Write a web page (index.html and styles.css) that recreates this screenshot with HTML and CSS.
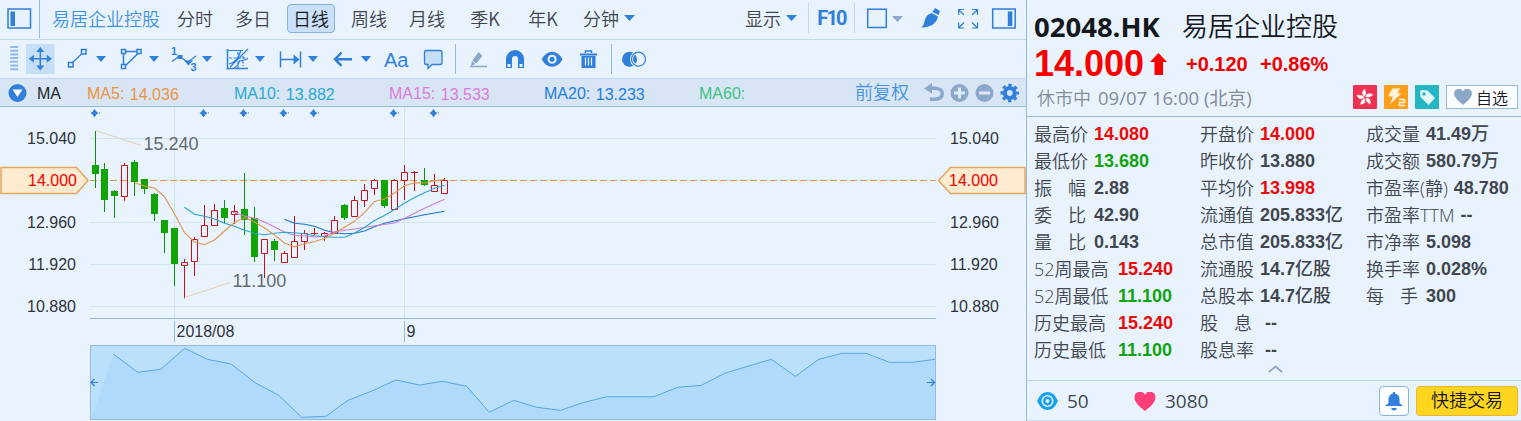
FILE: index.html
```html
<!DOCTYPE html>
<html lang="zh-CN">
<head>
    <meta charset="UTF-8">
    <meta name="viewport" content="width=device-width, initial-scale=1.0">
    <title>易居企业控股 02048.HK</title>
    <link rel="stylesheet" href="styles.css">
</head>
<body>
    <div class="app">
        <main class="chart-panel">
            <!-- period tabs -->
            <header class="top-bar">
                <svg class="panel-toggle" width="40" height="38" viewBox="0 0 40 38">
                    <rect x="8" y="9" width="22.5" height="19" class="line thick"/>
                    <rect x="10.5" y="11.5" width="4.5" height="14.5" class="fill"/>
                    <path d="M39.5 0V38" class="divider"/>
                </svg>
                <span class="stock-tab">易居企业控股</span>
                <nav class="tabs">
                    <span class="tab"><span>分时</span></span>
                    <span class="tab"><span>多日</span></span>
                    <span class="tab active"><span>日线</span></span>
                    <span class="tab"><span>周线</span></span>
                    <span class="tab"><span>月线</span></span>
                    <span class="tab"><span>季K</span></span>
                    <span class="tab"><span>年K</span></span>
                    <span class="tab"><span>分钟</span></span>
                </nav>
                <i class="caret"></i>
                <span class="display-menu">显示</span>
                <i class="caret"></i>
                <span class="f10">F10</span>
                <svg width="166" height="38" viewBox="860 0 166 38">
                    <rect x="867.7" y="9.2" width="18.6" height="18.3" class="line thick"/>
                    <path d="M892 16h11l-5.500 6z" fill="#8ba8cb"/>
                    <!-- brush -->
                    <path d="M935 8l5 3-1.500 4-6-3z M931.500 13l6.500 3.500c-1 6-7 11.500-17 11 3-1.500 3-5 4-8 1-3.500 3.500-5.500 6.500-6.500z" class="fill"/>
                    <!-- fullscreen -->
                    <path d="M958.700 15V9.500H964M959 10l5 5M972 9.500h5.500V15M977 10l-5 5M958.700 22.500V28H964M959 27.500l5-5M977.500 22.500V28H972M977 27.500l-5-5" class="line"/>
                    <rect x="992.700" y="9" width="22.500" height="19" class="line thick"/>
                    <rect x="1007.800" y="11.500" width="4.500" height="14.500" class="fill"/>
                </svg>
            </header>

            <!-- drawing tools -->
            <div class="tool-bar">
                <svg width="64" height="38" viewBox="0 40 64 38">
                    <path d="M14.200 46V72" stroke="#8fbbe8" stroke-width="8" stroke-dasharray="2 1.700"/>
                    <rect x="26" y="44" width="28.500" height="30" fill="#c6def7"/>
                    <path d="M40.300 49V68.500M30.500 58.700H50" class="line thick"/>
                    <path d="M40.300 47l4 5h-8zM40.300 70.500l4-5h-8zM28.800 58.700l5-4v8zM51.800 58.700l-5-4v8z" class="fill"/>
                </svg>
                <svg width="50" height="38" viewBox="64 40 50 38">
                    <path d="M72.500 62.500L81.500 54" class="line"/>
                    <rect x="68.500" y="62.500" width="4.500" height="4.500" class="line thick"/>
                    <rect x="81.500" y="49.500" width="4.500" height="4.500" class="line thick"/>
                    <path d="M96 56h10l-5 6z" class="fill"/>
                </svg>
                <svg width="53" height="38" viewBox="114 40 53 38">
                    <path d="M123.500 53V65M126 51.500H137M138 53.500L125.500 65.500" class="line thick"/>
                    <rect x="121.500" y="49.500" width="4" height="4" class="box"/>
                    <rect x="137" y="49.500" width="4" height="4" class="box"/>
                    <rect x="121.500" y="64.500" width="4" height="4" class="box"/>
                    <path d="M149 56h10l-5 6z" class="fill"/>
                </svg>
                <svg width="53" height="38" viewBox="167 40 53 38">
                    <path d="M172 61.500l7-5 9 5.500 8-6" class="line"/>
                    <rect x="177.500" y="55" width="5" height="4" class="fill"/>
                    <path d="M184 60.500h9l-4.500 5z" class="fill"/>
                    <text x="171" y="55" class="tiny">1</text>
                    <text x="190.500" y="71" class="tiny">3</text>
                    <path d="M202 56h10l-5 6z" class="fill"/>
                </svg>
                <svg width="53" height="38" viewBox="220 40 53 38">
                    <path d="M227.500 49V69.500M226.500 68.500H248" class="line thick"/>
                    <path d="M227 50.500H243M230 67L248 49M229 64q9-2 12-14M234 68q5-3 6-8M240 61l8-2" class="line"/>
                    <path d="M229 58H248M238 52V68M243 56v10" class="line" stroke-dasharray="3 1.500"/>
                    <path d="M255 56h10l-5 6z" class="fill"/>
                </svg>
                <svg width="55" height="38" viewBox="273 40 55 38">
                    <path d="M280.500 51.500V67.500M300.500 51.500V67.500M280 59.500H296" class="line thick"/>
                    <path d="M293.500 54.500l6 5-6 5z" class="fill"/>
                    <path d="M308 56h10l-5 6z" class="fill"/>
                </svg>
                <svg width="50" height="38" viewBox="328 40 50 38">
                    <path d="M336 59.200H352M341.500 52.500l-6.500 6.700 6.500 6.700" class="line bold"/>
                    <path d="M361 56h10l-5 6z" class="fill"/>
                </svg>
                <span class="text-tool">Aa</span>
                <svg width="248" height="38" viewBox="415 40 248 38">
                    <path d="M426.500 50.500h13.500q2 0 2 2v10q0 2-2 2h-8l-4 4v-4h-1.500q-2 0-2-2v-10q0-2 2-2z" fill="#c6def7" stroke="#2f7fdb" stroke-width="1.300"/>
                    <path d="M455.500 44V74M611.500 44V74" class="divider"/>
                    <path d="M471 66l1-5 6.500-9 4 4-7 8z" fill="#8ba8cb"/>
                    <path d="M471.500 60l5 4.500" stroke="#e8f3fd"/>
                    <path d="M470 66.500H487" stroke="#8ba8cb" stroke-width="1.500"/>
                    <!-- magnet -->
                    <path d="M506 68V59a9 9 0 0 1 18 0v9h-6v-9a3 3 0 0 0-6 0v9z" class="fill"/>
                    <path d="M507.500 64h3v3h-3zM519.500 64h3v3h-3z" fill="#e8f3fd"/>
                    <!-- eye -->
                    <path d="M541.700 59.300q4-7.500 10.400-7.500t10.400 7.500q-4 7.500-10.400 7.500t-10.400-7.500z" class="fill"/>
                    <circle cx="552.100" cy="59.300" r="4.500" fill="#e8f3fd"/>
                    <circle cx="552.100" cy="59.300" r="2.500" class="fill"/>
                    <!-- trash -->
                    <path d="M580 53.500h17v2h-17zM581.500 56h14v12h-14z" class="fill"/>
                    <path d="M585.500 53v-2h6v2" class="line thick"/>
                    <path d="M585.500 57.500v8M588.500 57.500v8M591.500 57.500v8" stroke="#e8f3fd" stroke-width="1.200"/>
                    <!-- compare -->
                    <circle cx="629.500" cy="59.200" r="7.500" class="fill"/>
                    <circle cx="638.500" cy="59.200" r="7" fill="none" stroke="#e8f3fd" stroke-width="3"/>
                    <circle cx="638.500" cy="59.200" r="7" class="line"/>
                </svg>
            </div>

            <!-- moving averages -->
            <div class="ma-bar">
                <svg width="37" height="28" viewBox="0 79 37 28">
                    <circle cx="17.500" cy="93" r="9" class="fill"/>
                    <path d="M12.500 89.500h10l-5 7.500z" fill="#fff"/>
                </svg>
                <span class="ma-title">MA</span>
                <span class="ma ma5">MA5: <b>14.036</b></span>
                <span class="ma ma10">MA10: <b>13.882</b></span>
                <span class="ma ma15">MA15: <b>13.533</b></span>
                <span class="ma ma20">MA20: <b>13.233</b></span>
                <span class="ma ma60">MA60:</span>
                <span class="adjust">前复权</span>
                <svg width="108" height="28" viewBox="918 79 108 28">
                    <g fill="#8ba8cb">
                        <path d="M924 88.500l8-5.500v3.500h3q9 .5 9 7.300t-9 7.300h-5v-3.700h5q5.500 0 5.500-3.800t-5.500-3.700h-3v3.600z"/>
                        <circle cx="959.500" cy="93" r="9"/>
                        <circle cx="984.500" cy="93" r="9"/>
                    </g>
                    <path d="M954 93h11M959.500 87.500v11M979 93h11" stroke="#dfeaf8" stroke-width="3"/>
                    <circle cx="1009.800" cy="93" r="5" fill="none" stroke="#2f7fdb" stroke-width="4.200"/>
                    <circle cx="1009.800" cy="93" r="8" fill="none" stroke="#2f7fdb" stroke-width="2.600" stroke-dasharray="3.300 2.983" stroke-dashoffset="1.650"/>
                </svg>
            </div>

            <svg class="chart" width="1026" height="314" viewBox="0 107 1026 314">
                <path class="grid" d="M90 138.500H936M90 222.500H936M90 264.500H936M90 306.500H936M174.500 107V318M404.500 107V318"/>
                <path class="axis-line" d="M90 318.500H936M174.500 321V342M404.500 321V342"/>
                <path class="price-line" d="M90 180.500H936"/>

                <!-- event markers -->
                <g class="markers">
                    <path id="marker" d="M90.500 113l2-1.300 2-2.700 2 2.700 2 1.300-2 1.500-2 2.700-2-2.700zM99 112.500h1v1h-1z"/>
                    <use href="#marker" x="109"/>
                    <use href="#marker" x="149"/>
                    <use href="#marker" x="189"/>
                    <use href="#marker" x="219"/>
                    <use href="#marker" x="299"/>
                    <use href="#marker" x="339"/>
                </g>

                <!-- falling candles -->
                <path class="down-wick" d="M95.500 131V188M104.500 163V212M114.500 190V218M134.500 160V196M144.500 179V194M154.500 193V221M164.500 220V253M174.500 228V286M224.500 200V223M244.500 173V235M254.500 207V262M274.500 239V261M344.500 204V220M384.500 180V208M424.500 168V186"/>
                <path class="down-body" d="M92 165h7v9h-7zM101 169h7v31h-7zM111 191h7v5h-7zM131 162h7v20h-7zM141 179h7v10h-7zM151 194h7v20h-7zM161 220h7v13h-7zM171 228h7v36h-7zM221 208h7v10h-7zM241 209h7v11h-7zM251 218h7v39h-7zM271 241h7v9h-7zM341 205h7v13h-7zM381 180h7v26h-7zM421 180h7v5h-7z"/>
                <!-- rising candles -->
                <path class="up" d="M124.500 163V165M124.500 197V201M184.500 259V262M184.500 266V298.500M194.500 237V239M194.500 262V276M204.500 205V225M214.500 204V210M234.500 205V211M234.500 215V224M264.500 254V278M284.500 251V253M294.500 216V241M304.500 230V233M304.500 242V250M311 233.500H318M314.500 228V235M324.500 232V233M324.500 237V241M334.500 216V220M354.500 196V200M364.500 184V190M364.500 201V207M374.500 179V180M374.500 189V195M394.500 179V180M404.500 165V172M404.500 181V200M411 172.500H418M414.500 171V191M434.500 174V185M444.500 178V180"/>
                <path class="up" d="M121.500 165.500h6v31h-6zM181.500 262.500h6v3h-6zM191.500 239.500h6v22h-6zM201.500 225.500h6v11h-6zM211.500 210.500h6v15h-6zM231.500 211.500h6v3h-6zM261.500 239.500h6v14h-6zM281.500 253.500h6v9h-6zM291.500 241.500h6v16h-6zM301.500 233.500h6v8h-6zM321.500 233.500h6v3h-6zM331.500 220.500h6v13h-6zM351.500 200.500h6v16h-6zM361.500 190.500h6v10h-6zM371.500 180.500h6v8h-6zM391.500 180.500h6v29h-6zM401.500 172.500h6v8h-6zM431.500 185.500h6v6h-6zM441.500 180.500h6v13h-6z"/>

                <polyline class="avg avg20" points="284.500,219.300 294.500,223.300 304.500,224.300 314.500,226.300 324.500,230.300 334.500,232.700 344.500,233.700 354.500,233.300 364.500,231 374.500,226.700 384.500,223.300 404.500,218.700 424.500,214.700 444.500,211.300"/>
                <polyline class="avg avg15" points="233,212.300 244.500,216 254.500,218.300 264.500,222 274.500,227 284.500,232 294.500,235.300 304.500,236 314.500,237 324.500,236 334.500,231.700 354.500,229 374.500,225.700 394.500,223 404.500,218.300 424.500,208.300 444.500,199.300"/>
                <polyline class="avg avg10" points="184.500,207.300 194.500,214.300 204.500,216.300 214.500,219 224.500,223.300 234.500,226.300 244.500,230.300 254.500,233.300 264.500,234.700 274.500,233.300 284.500,232.300 294.500,232.700 304.500,233.700 314.500,235.700 324.500,236.700 334.500,237.300 344.500,237.300 354.500,233 364.500,227.500 374.500,220.500 384.500,215.500 394.500,209.500 404.500,203.300 414.500,197.500 424.500,192.700 434.500,188.300 444.500,185.300"/>
                <polyline class="avg avg5" points="134.500,182.700 144.500,186 154.500,188 164.500,196.700 174.500,214 184.500,232.700 194.500,242 204.500,244.700 214.500,240 224.500,231 234.500,222.500 244.500,217.500 254.500,222 264.500,228 274.500,235 284.500,243 294.500,247 304.500,243.700 314.500,241.500 324.500,238.500 334.500,233.300 344.500,227.300 354.500,221.300 364.500,212.700 374.500,201.500 384.500,199 394.500,193 404.500,185.700 414.500,182.700 424.500,183 434.500,180.600 444.500,179.500"/>

                <!-- high and low callouts -->
                <path class="callout-line" d="M95.500 130.500L141 145.500M184.500 297.500L230 282.500"/>
                <text class="callout" x="143.500" y="150">15.240</text>
                <text class="callout" x="232.500" y="287">11.100</text>

                <!-- price scales -->
                <path class="price-tag" d="M1 167.500H76.500L88 180.500L76.500 193.500H1z"/>
                <path class="price-tag" d="M1025 167.500H950.500L938.500 180.500L950.500 193.500H1025z"/>
                <g class="scale" text-anchor="end">
                    <text x="76" y="144">15.040</text>
                    <text x="77" y="186" class="now">14.000</text>
                    <text x="76" y="228">12.960</text>
                    <text x="76" y="270">11.920</text>
                    <text x="76" y="312">10.880</text>
                </g>
                <g class="scale">
                    <text x="950" y="144">15.040</text>
                    <text x="949" y="186" class="now">14.000</text>
                    <text x="950" y="228">12.960</text>
                    <text x="950" y="270">11.920</text>
                    <text x="950" y="312">10.880</text>
                    <text x="176.500" y="337">2018/08</text>
                    <text x="406.500" y="337">9</text>
                </g>

                <!-- range navigator -->
                <rect class="nav-box" x="90.500" y="345.500" width="845" height="74"/>
                <path class="nav-area" d="M91 419L113.300 354L137.700 372.300L160.700 369.300L184.700 348.300L207.300 359.300L231.300 364L255 382.700L278.700 395.300L301.700 417.300L325.700 416.300L348 400.300L372.700 390.700L395.700 380L419.300 385L442.700 381.300L466.700 386.300L489.300 412.300L513.600 400.300L536.800 407.300L560.400 410.300L583.200 402.700L606.400 396.700H653.900L677.500 387.300L701.400 385.300L724.600 373.300L748.600 366L771.400 359.300L795.400 376.300L818.900 359.300L841.800 353.300H866L889.600 362.300H912.900L935 359.300V419z"/>
                <polyline class="nav-line" points="113.300,354 137.700,372.300 160.700,369.300 184.700,348.300 207.300,359.300 231.300,364 255,382.700 278.700,395.300 301.700,417.300 325.700,416.300 348,400.300 372.700,390.700 395.700,380 419.300,385 442.700,381.300 466.700,386.300 489.300,412.300 513.600,400.300 536.800,407.300 560.400,410.300 583.200,402.700 606.400,396.700 653.900,396.700 677.500,387.300 701.400,385.300 724.600,373.300 748.600,366 771.400,359.300 795.400,376.300 818.900,359.300 841.800,353.300 866,353.300 889.600,362.300 912.900,362.300 935,359.300"/>
                <path class="line" d="M98 382.500H91.500M94.500 379l-3.500 3.500 3.500 3.500M927 382.500h7.500M931 379l3.500 3.500-3.500 3.500"/>
            </svg>
        </main>

        <aside class="quote-panel">
            <section class="quote-head">
                <div class="title-row"><span class="code">02048.HK</span><span class="name">易居企业控股</span></div>
                <div class="price-row">
                    <span class="price">14.000</span>
                    <svg width="17" height="22" viewBox="0 0 17 22"><path d="M8.500 0L17 9h-4v13H4.500V9H0z" fill="#f80000"/></svg>
                    <span class="change">+0.120</span>
                    <span class="change">+0.86%</span>
                </div>
                <div class="status-row">
                    <span class="status">休市中</span>
                    <span class="status time">09/07 16:00 (北京)</span>
                    <span class="badges">
                        <svg width="24" height="24" viewBox="0 0 24 24">
                            <rect width="24" height="24" rx="1" fill="#f03252"/>
                            <g fill="#fff" stroke="#f03252" stroke-width=".8">
                                <path id="petal" d="M12 12.500C7 10 8.500 4.500 12.500 3.500c-.5 2 2.500 4.500-.5 9z"/>
                                <use href="#petal" transform="rotate(72 12 12.500)"/>
                                <use href="#petal" transform="rotate(144 12 12.500)"/>
                                <use href="#petal" transform="rotate(216 12 12.500)"/>
                                <use href="#petal" transform="rotate(288 12 12.500)"/>
                            </g>
                        </svg>
                        <svg width="24" height="24" viewBox="0 0 24 24">
                            <rect width="24" height="24" rx="1" fill="#fd9f1b"/>
                            <path d="M8.500 3.500H16l-2.500 5h4L6 19l3-7.500H4z" fill="#fff5d8"/>
                            <path d="M15 14.500h5.500v3H15.500v3H21" fill="none" stroke="#fff5d8" stroke-width="1.500"/>
                        </svg>
                        <svg width="24" height="24" viewBox="0 0 24 24">
                            <rect width="24" height="24" rx="1" fill="#25b6c4"/>
                            <path d="M5 6.500L6.500 5l6 .5 7.500 7.500-6.500 7L5.500 12z" fill="#e4f7fa"/>
                            <circle cx="9" cy="9" r="1.700" fill="#25b6c4"/>
                        </svg>
                    </span>
                    <span class="watch">
                        <svg width="18" height="16" viewBox="0 0 22 20"><path d="M11 20C3 13.500 0 10 0 6a5.800 5.800 0 0 1 11-3 5.800 5.800 0 0 1 11 3c0 4-3 7.500-11 14z" fill="#8ba8cb"/></svg>
                        自选
                    </span>
                </div>
            </section>

            <section class="stats">
                <div class="col">
                    <div class="row"><label>最高价</label><b class="red">14.080</b></div>
                    <div class="row"><label>最低价</label><b class="green">13.680</b></div>
                    <div class="row"><label class="pair"><i>振</i><i>幅</i></label><b>2.88</b></div>
                    <div class="row"><label class="pair"><i>委</i><i>比</i></label><b>42.90</b></div>
                    <div class="row"><label class="pair"><i>量</i><i>比</i></label><b>0.143</b></div>
                    <div class="row wide"><label>52周最高</label><b class="red">15.240</b></div>
                    <div class="row wide"><label>52周最低</label><b class="green">11.100</b></div>
                    <div class="row wide"><label>历史最高</label><b class="red">15.240</b></div>
                    <div class="row wide"><label>历史最低</label><b class="green">11.100</b></div>
                </div>
                <div class="col">
                    <div class="row"><label>开盘价</label><b class="red">14.000</b></div>
                    <div class="row"><label>昨收价</label><b>13.880</b></div>
                    <div class="row"><label>平均价</label><b class="red">13.998</b></div>
                    <div class="row"><label>流通值</label><b>205.833<u>亿</u></b></div>
                    <div class="row"><label>总市值</label><b>205.833<u>亿</u></b></div>
                    <div class="row"><label>流通股</label><b>14.7<u>亿股</u></b></div>
                    <div class="row"><label>总股本</label><b>14.7<u>亿股</u></b></div>
                    <div class="row none"><label class="pair"><i>股</i><i>息</i></label><b>--</b></div>
                    <div class="row none"><label>股息率</label><b>--</b></div>
                </div>
                <div class="col">
                    <div class="row"><label>成交量</label><b>41.49<u>万</u></b></div>
                    <div class="row"><label>成交额</label><b>580.79<u>万</u></b></div>
                    <div class="row"><label>市盈率(静)</label><b>48.780</b></div>
                    <div class="row"><label>市盈率TTM</label><b>--</b></div>
                    <div class="row"><label>市净率</label><b>5.098</b></div>
                    <div class="row"><label>换手率</label><b>0.028%</b></div>
                    <div class="row"><label class="pair"><i>每</i><i>手</i></label><b>300</b></div>
                </div>
            </section>
            <div class="collapse">
                <svg width="15" height="8" viewBox="0 0 15 8"><path d="M1 7l6.500-5.500L14 7" fill="none" stroke="#8ba8cb" stroke-width="1.800"/></svg>
            </div>

            <footer class="quote-foot">
                <svg width="21" height="20" viewBox="0 0 21 20">
                    <path d="M0 10Q4 1 10.500 1T21 10Q17 19 10.500 19T0 10z" fill="#17a2f0"/>
                    <circle cx="10.500" cy="10" r="6" fill="#e8f3fd"/>
                    <circle cx="10.500" cy="10" r="3.200" fill="none" stroke="#17a2f0" stroke-width="2.600"/>
                </svg>
                <span class="views">50</span>
                <svg width="22" height="19" viewBox="0 0 22 20"><path d="M11 20C3 13.500 0 10 0 6a5.800 5.800 0 0 1 11-3 5.800 5.800 0 0 1 11 3c0 4-3 7.500-11 14z" fill="#ff3f7a"/></svg>
                <span class="likes">3080</span>
                <span class="bell">
                    <svg width="18" height="19" viewBox="0 0 18 19">
                        <path d="M8 0h2v1.500q4.500 1 4.500 6V11L18 14H0l3.500-3V7.500q0-5 4.500-6zM6 16h6q-1 2.500-3 2.500T6 16z" class="fill"/>
                    </svg>
                </span>
                <span class="trade">快捷交易</span>
            </footer>
        </aside>
    </div>
</body>
</html>
```
FILE: styles.css
```css
* {
    box-sizing: border-box;
}

body {
    margin: 0;
    background: #e8f3fd;
    color: #42464f;
    font-family: "Liberation Sans", "Noto Sans CJK SC", sans-serif;
    font-weight: 350;
}

svg {
    display: block;
    flex: none;
}

.app {
    display: flex;
    width: 1521px;
    height: 421px;
    overflow: hidden;
    white-space: nowrap;
}

.chart-panel {
    width: 1027px;
    flex: none;
    border-right: 1px solid #94badf;
}

/* shared icon strokes */
.line {
    fill: none;
    stroke: #2f7fdb;
    stroke-width: 1.2;
}

.thick { stroke-width: 1.5; }
.bold { stroke-width: 2.5; }
.fill { fill: #2f7fdb; }
.divider { stroke: #94badf; }

.box {
    fill: #e8f3fd;
    stroke: #2f7fdb;
    stroke-width: 1.5;
}

.tiny {
    font: bold 11px "Liberation Sans", sans-serif;
    fill: #2f7fdb;
}

.caret {
    width: 11px;
    height: 6px;
    background: #2f7fdb;
    clip-path: polygon(0 0, 100% 0, 50% 100%);
}

/* top bar */
.top-bar {
    display: flex;
    align-items: center;
    height: 40px;
    padding-bottom: 3px;
    border-bottom: 1px solid #c3d8ec;
    font-family: "Noto Sans CJK SC", sans-serif;
    font-size: 18px;
}

.top-bar svg {
    align-self: flex-start;
}

.stock-tab {
    width: 114px;
    margin-left: 12px;
    color: #4394e2;
}

.tabs {
    display: flex;
}

.tab {
    width: 58px;
    display: flex;
    justify-content: center;
}

.tab span {
    height: 29px;
    padding: 0 5px;
    line-height: 26px;
    border: 1px solid transparent;
    border-radius: 4px;
}

.active span {
    background: #c9e0f8;
    border-color: #86b3e0;
    color: #15181d;
}

.tabs + .caret {
    margin-left: -6px;
}

.display-menu {
    margin: 0 5px 0 auto;
}

.f10 {
    width: 47px;
    height: 30px;
    margin-left: 11px;
    margin-right: 5px;
    border: solid #c3d8ec;
    border-width: 0 1px;
    color: #2f7fdb;
    font: bold 20px/31px Roboto, sans-serif;
    letter-spacing: -1.8px;
    text-align: center;
}

/* drawing tools */
.tool-bar {
    display: flex;
    height: 39px;
    border-bottom: 1px solid #c3d8ec;
}

.text-tool {
    width: 37px;
    padding-left: 6px;
    color: #2f7fdb;
    font-size: 20px;
    line-height: 40px;
}

/* moving averages */
.ma-bar {
    display: flex;
    height: 28px;
    background: #d7e5f5;
    border-bottom: 1px solid #94badf;
    font-size: 16px;
    line-height: 29px;
}

.ma-title {
    width: 50px;
    color: #22262c;
}

.ma {
    display: flex;
    gap: 5.500px;
    width: 155px;
}

.ma b {
    font-weight: normal;
    padding-top: 1px;
}

.ma5 { width: 147px; color: #ee9440; }
.ma10 { color: #2aa9d6; }
.ma15 { color: #dc7bdc; }
.ma20 { color: #1e7fe0; }
.ma60 { color: #3fc184; width: 156px; }

.adjust {
    width: 63px;
    color: #4394e2;
    font-size: 18px;
}

/* chart */
.grid {
    fill: none;
    stroke: #d3e4f1;
}

.axis-line {
    fill: none;
    stroke: #94badf;
}

.price-line {
    stroke: #d6994e;
    stroke-dasharray: 7 3;
}

.markers { fill: #2f7fdb; }
.down-wick { stroke: #0a900a; }
.down-body { fill: #10a505; }

.up {
    fill: none;
    stroke: #c8101a;
}

.avg {
    fill: none;
    stroke-width: 1.1;
}

.avg5 { stroke: #e2944a; }
.avg10 { stroke: #2aa5cf; }
.avg15 { stroke: #d37bd6; }
.avg20 { stroke: #1f76d2; }

.callout-line {
    fill: none;
    stroke: #e7cfae;
}

.callout {
    font-size: 18px;
    fill: #656a72;
}

.scale {
    font-size: 16px;
    fill: #30343b;
}

.now { fill: #f00000; }

.price-tag {
    fill: #ffebd0;
    stroke: #e3a762;
    stroke-width: 1.5;
}

.nav-box {
    fill: #bbe0fc;
    stroke: #94badf;
}

.nav-area { fill: #b0dafb; }

.nav-line {
    fill: none;
    stroke: #56a7e6;
}

/* quote panel */
.quote-panel {
    width: 494px;
    display: flex;
    flex-direction: column;
    font-size: 18px;
}

.quote-head {
    height: 117px;
    padding: 7px 3px 0 7px;
    border-bottom: 1px solid #94badf;
}

.title-row {
    display: flex;
    height: 40px;
    line-height: 41px;
    color: #15181d;
}

.code {
    width: 148px;
    font: bold 27.500px/39px "Open Sans", sans-serif;
}

.name {
    font-size: 26px;
}

.price-row {
    display: flex;
    align-items: center;
    height: 34px;
    color: #f00000;
    font-weight: bold;
}

.price {
    width: 116px;
    font-size: 36px;
    color: #f80000;
}

.change {
    width: 74px;
    font-size: 20px;
}

.price-row svg { margin-right: 19px; }

.status-row {
    display: flex;
    align-items: center;
    height: 32px;
    padding-left: 3px;
    color: #848c98;
}

.status {
    width: 61px;
    font-family: "Open Sans", "Noto Sans CJK SC", sans-serif;
}

.time {
    width: 200px;
    font-size: 18.500px;
    font-weight: 400;
}

.badges {
    display: flex;
    gap: 7px;
    margin-left: auto;
}

.watch {
    display: flex;
    align-items: center;
    gap: 4px;
    width: 72px;
    height: 24px;
    margin-left: 7px;
    padding-left: 7px;
    background: #fdfeff;
    border: 1px solid #94badf;
    color: #15181d;
    font-size: 16px;
}

.stats {
    display: flex;
    height: 247px;
    padding: 4px 0 0 7px;
}

.col {
    width: 166px;
    flex: none;
}

.row {
    display: flex;
    height: 27px;
    line-height: 27px;
}

.row label {
    min-width: 54px;
    margin-right: 6px;
    font-family: "Open Sans", "Noto Sans CJK SC", sans-serif;
}

.row b { font-weight: bold; }

.row .pair {
    display: flex;
    justify-content: space-between;
    padding-right: 2px;
}

.pair i { font-style: normal; }
.wide label { min-width: 78px; }
.none label { margin-right: 11px; }

.row u {
    font-weight: 500;
    text-decoration: none;
}

.red { color: #ee0a0a; }
.green { color: #12a312; }

.collapse {
    height: 17px;
    padding: 1px 0 0 241px;
    border-bottom: 1px solid #bcd2e8;
}

.quote-foot {
    display: flex;
    align-items: center;
    height: 40px;
    padding: 1px 3px 0 10px;
    border-bottom: 1px solid #c9dced;
    font-family: "Open Sans", "Noto Sans CJK SC", sans-serif;
    font-size: 19px;
}

.views,
.likes {
    margin-left: 9px;
    font-weight: 400;
}

.views { width: 67px; }

.bell {
    display: flex;
    align-items: center;
    justify-content: center;
    width: 30px;
    height: 30px;
    margin-left: auto;
    background: #fdfeff;
    border: 1px solid #86b3e0;
    border-radius: 4px;
}

.trade {
    width: 102px;
    height: 30px;
    margin-left: 7px;
    background: #ffd51e;
    border: 1px solid #e8b33a;
    border-radius: 4px;
    color: #15181d;
    font-size: 18px;
    line-height: 27px;
    text-align: center;
}
```
